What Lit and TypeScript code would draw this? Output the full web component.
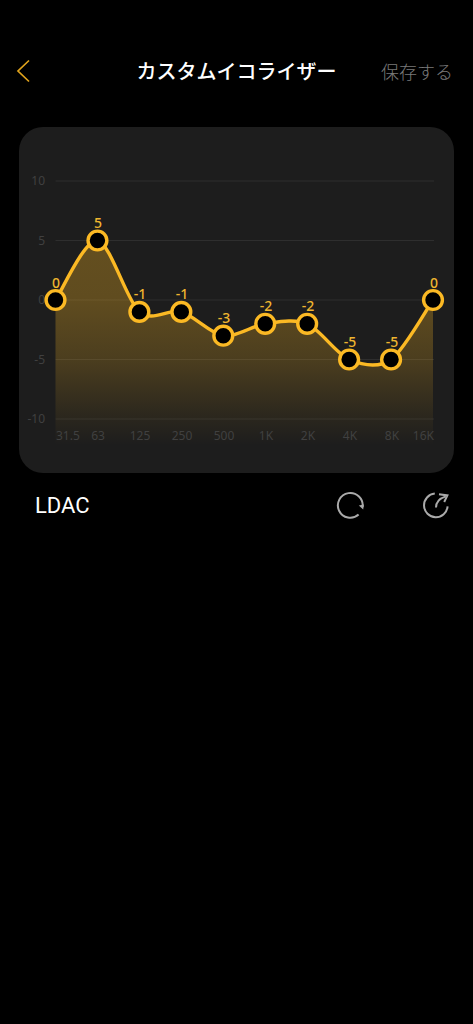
import { LitElement, css, html, svg } from "lit";
import { customElement, state } from "lit/decorators.js";

interface Band {
  label: string;
  gain: number;
}

const LEFT = 36.5;
const RIGHT = 414;
const ZERO_Y = 173;
const UNIT = 11.9;
const BOTTOM = 318;
const SMOOTHING = 0.15;

@customElement("eq-chart")
class EqChart extends LitElement {
  static styles = css`
    :host {
      display: block;
      background: #1d1d1d;
      border-radius: 24px;
    }
    .plot {
      display: block;
      width: 100%;
      height: auto;
      font-family: "Noto Sans", "Open Sans", sans-serif;
    }
    .grid {
      stroke: #2e2e2e;
      stroke-width: 1;
    }
    .axis {
      fill: #404040;
      font-size: 12px;
    }
    .middle {
      text-anchor: middle;
    }
    .end {
      text-anchor: end;
    }
    .curve {
      fill: none;
      stroke: #fbb924;
      stroke-width: 3.4;
    }
    .knob {
      fill: #000;
      stroke: #fbb924;
      stroke-width: 3.4;
    }
    .value {
      fill: #efb52f;
      font-size: 14px;
      font-weight: 500;
      text-anchor: middle;
    }
  `;

  @state() private bands: Band[] = [
    { label: "31.5", gain: 0 },
    { label: "63", gain: 5 },
    { label: "125", gain: -1 },
    { label: "250", gain: -1 },
    { label: "500", gain: -3 },
    { label: "1K", gain: -2 },
    { label: "2K", gain: -2 },
    { label: "4K", gain: -5 },
    { label: "8K", gain: -5 },
    { label: "16K", gain: 0 },
  ];

  private x(i: number) {
    return LEFT + (i * (RIGHT - LEFT)) / (this.bands.length - 1);
  }

  private y(gain: number) {
    return ZERO_Y - gain * UNIT;
  }

  private curve() {
    const pts = this.bands.map((b, i) => [this.x(i), this.y(b.gain)]);
    const at = (i: number) => pts[Math.max(0, Math.min(pts.length - 1, i))];
    let d = `M${pts[0][0]} ${pts[0][1]}`;
    for (let i = 1; i < pts.length; i++) {
      const [a, b, c, e] = [at(i - 2), at(i - 1), at(i), at(i + 1)];
      const x1 = b[0] + (c[0] - a[0]) * SMOOTHING;
      const y1 = b[1] + (c[1] - a[1]) * SMOOTHING;
      const x2 = c[0] - (e[0] - b[0]) * SMOOTHING;
      const y2 = c[1] - (e[1] - b[1]) * SMOOTHING;
      d += `C${x1} ${y1} ${x2} ${y2} ${c[0]} ${c[1]}`;
    }
    return d;
  }

  render() {
    const line = this.curve();
    const last = this.bands.length - 1;
    return html`
      <svg class="plot" viewBox="0 0 435 346" role="img" aria-label="イコライザー">
        <defs>
          <linearGradient id="fade" gradientUnits="userSpaceOnUse" x1="0" y1="113" x2="0" y2=${BOTTOM}>
            <stop offset="0" stop-color="#fbb924" stop-opacity="0.32" />
            <stop offset="0.3" stop-color="#fbb924" stop-opacity="0.3" />
            <stop offset="0.58" stop-color="#fbb924" stop-opacity="0.21" />
            <stop offset="0.87" stop-color="#fbb924" stop-opacity="0.06" />
            <stop offset="1" stop-color="#fbb924" stop-opacity="0" />
          </linearGradient>
        </defs>
        ${[10, 5, 0, -5, -10].map(
          (g) => svg`
            <line class="grid" x1=${LEFT} x2=${RIGHT + 1} y1=${this.y(g)} y2=${this.y(g)} />
            <text class="axis end" x="26" y=${Math.round(this.y(g) + 4.4)}>${g}</text>`
        )}
        <path fill="url(#fade)" d="${line}V${BOTTOM}H${LEFT}Z" />
        ${this.bands.map((b, i) => {
          const cls = i === 0 ? "axis" : i === last ? "axis end" : "axis middle";
          const x = i === 0 ? Math.round(LEFT) : Math.round(this.x(i) + 1);
          return svg`<text class=${cls} x=${x} y="313">${b.label}</text>`;
        })}
        <path class="curve" d=${line} />
        ${this.bands.map(
          (b, i) => svg`
            <circle class="knob" cx=${this.x(i)} cy=${this.y(b.gain)} r="9.4" />
            <text class="value" x=${Math.round(this.x(i) + 0.5)} y=${Math.floor(this.y(b.gain)) - 12}>${b.gain}</text>`
        )}
      </svg>
    `;
  }
}

@customElement("app-root")
class AppRoot extends LitElement {
  static styles = css`
    :host {
      display: block;
      box-sizing: border-box;
      min-height: 100vh;
      padding-top: 50px;
      background: #000;
      color: #fff;
      font-family: "Noto Sans CJK JP", sans-serif;
    }
    button {
      display: flex;
      align-items: center;
      padding: 0;
      border: 0;
      background: none;
      color: inherit;
      font: inherit;
      cursor: pointer;
    }
    .bar {
      display: grid;
      grid-template-columns: 1fr auto 1fr;
      align-items: center;
      height: 41px;
      padding: 0 16px;
    }
    .back {
      justify-self: start;
    }
    .title {
      margin: 0;
      font-size: 20px;
      line-height: 28px;
      font-weight: 500;
    }
    .save {
      justify-self: end;
      padding-right: 4px;
      color: #7a7a7a;
      font-size: 18px;
      line-height: 28px;
      font-weight: 300;
    }
    .card {
      margin: 36px 19px 0;
    }
    .tools {
      display: flex;
      align-items: center;
      gap: 53px;
      height: 40px;
      margin-top: 12px;
      padding: 0 21px 0 35px;
    }
    .codec {
      flex: 1;
      margin: 0;
      padding-top: 2px;
      font-family: Roboto, sans-serif;
      font-size: 22px;
      line-height: 28px;
      font-weight: 400;
    }
    .icon {
      display: block;
      fill: none;
      stroke: #aaa;
      stroke-width: 2;
    }
    .tip {
      fill: #aaa;
      stroke: none;
    }
    .chevron {
      display: block;
      fill: none;
      stroke: #e0a31c;
      stroke-width: 1.7;
    }
  `;

  render() {
    return html`
      <header class="bar">
        <button class="back" aria-label="戻る">
          <svg class="chevron" width="16" height="24" viewBox="0 0 16 24">
            <path d="M13 1.5L2 12L13 22.5" />
          </svg>
        </button>
        <h1 class="title">カスタムイコライザー</h1>
        <button class="save">保存する</button>
      </header>
      <main>
        <eq-chart class="card"></eq-chart>
        <section class="tools">
          <h2 class="codec">LDAC</h2>
          <button aria-label="リセット">
            <svg class="icon" width="32" height="32" viewBox="0 0 32 32">
              <path d="M23.6 25.6A12.4 12.4 0 1 1 27.6 18" />
              <path class="tip" d="M23.8 16.4L28.8 15.6L28.2 20.6Z" />
            </svg>
          </button>
          <button aria-label="共有">
            <svg class="icon" width="32" height="32" viewBox="0 0 32 32">
              <path d="M14.8 4.6A11.8 11.8 0 1 0 27.6 17.4" />
              <path d="M16 18.5C16 13.5 19 9.6 25.8 7.4" />
              <path d="M19 5.2L27.4 6.4L24.2 13" />
            </svg>
          </button>
        </section>
      </main>
    `;
  }
}
